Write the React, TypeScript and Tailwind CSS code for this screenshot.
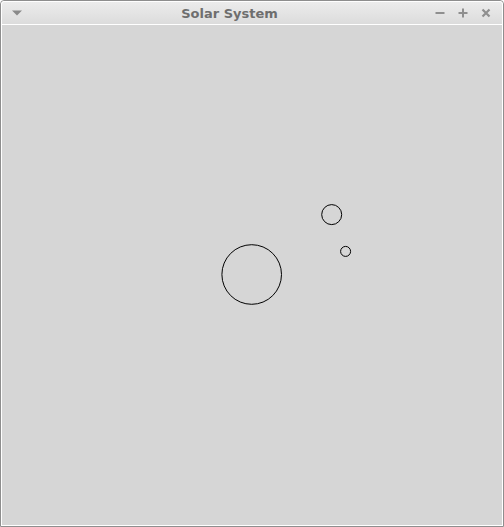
const TitleBar = () => {
  return (
    <div className="flex h-[23px] items-center bg-gradient-to-b from-[#ececec] to-[#dcdcdc] border-b border-white">
      <div className="w-[27px] flex pl-[10px]">
        <svg width="10" height="6" viewBox="0 0 10 6">
          <polygon points="0,0.5 10,0.5 5,5.5" fill="#8a8a8a" />
        </svg>
      </div>
      <div className="flex-1 text-center text-[13px] font-bold text-[#6e6e6e] leading-none" style={{ fontFamily: '"DejaVu Sans", sans-serif' }}>
        Solar System
      </div>
      <div className="w-[72px] flex items-center gap-[13px] pl-[5px] pr-[11px]">
        <svg width="10" height="10" viewBox="0 0 10 10">
          <rect x="0.5" y="4" width="9" height="2" fill="#8f8f8f" />
        </svg>
        <svg width="10" height="10" viewBox="0 0 10 10">
          <rect x="0.5" y="4" width="9" height="2" fill="#8f8f8f" />
          <rect x="4" y="0.5" width="2" height="9" fill="#8f8f8f" />
        </svg>
        <svg width="10" height="10" viewBox="0 0 10 10">
          <path d="M1.5 1.5 L8.5 8.5 M8.5 1.5 L1.5 8.5" stroke="#8f8f8f" strokeWidth="2.2" />
        </svg>
      </div>
    </div>
  );
};

const App = () => {
  return (
    <div className="w-[504px] h-[527px] border border-[#8e8e8e] rounded-t-[4px] overflow-hidden bg-white">
      <div className="h-full flex flex-col border border-white rounded-t-[3px] overflow-hidden">
        <TitleBar />
        <div className="flex-1 bg-[#d6d6d6]">
          <svg width="500" height="500" viewBox="0 0 500 500" className="block">
            <circle cx="249.7" cy="249.5" r="29.8" fill="none" stroke="#000" strokeWidth="1" />
            <circle cx="329.7" cy="189.6" r="10" fill="none" stroke="#000" strokeWidth="1" />
            <circle cx="343.6" cy="226.4" r="5" fill="none" stroke="#000" strokeWidth="1" />
          </svg>
        </div>
      </div>
    </div>
  );
};

export default App;
